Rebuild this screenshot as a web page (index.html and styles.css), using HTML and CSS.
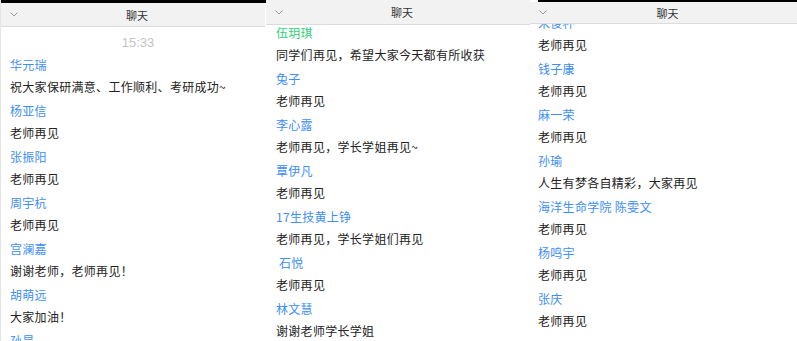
FILE: index.html
```html
<!DOCTYPE html>
<html>
<head>
<meta charset="utf-8">
<title>聊天</title>
<link rel="stylesheet" href="styles.css">
</head>
<body>
<div class="board">

  <section class="panel panel-one">
    <div class="bar"></div>
    <header class="head">
      <span class="chev"><svg width="8" height="5" viewBox="0 0 8 5"><path d="M0.5 0.5 L4 4 L7.5 0.5" fill="none" stroke="#999" stroke-width="1"/></svg></span>
      <span class="title">聊天</span>
    </header>
    <div class="body">
      <div class="list">
        <div class="time">15:33</div>
        <div class="msg"><div class="name">华元瑞</div><div class="text">祝大家保研满意、工作顺利、考研成功~</div></div>
        <div class="msg"><div class="name">杨亚信</div><div class="text">老师再见</div></div>
        <div class="msg"><div class="name">张振阳</div><div class="text">老师再见</div></div>
        <div class="msg"><div class="name">周宇杭</div><div class="text">老师再见</div></div>
        <div class="msg"><div class="name">宫澜嘉</div><div class="text">谢谢老师，老师再见！</div></div>
        <div class="msg"><div class="name">胡萌远</div><div class="text">大家加油！</div></div>
        <div class="msg"><div class="name">孙昊</div><div class="text">老师再见</div></div>
      </div>
    </div>
  </section>

  <section class="panel panel-two">
    <header class="head">
      <span class="chev"><svg width="8" height="5" viewBox="0 0 8 5"><path d="M0.5 0.5 L4 4 L7.5 0.5" fill="none" stroke="#999" stroke-width="1"/></svg></span>
      <span class="title">聊天</span>
    </header>
    <div class="body">
      <div class="list">
        <div class="msg"><div class="name green">伍玥琪</div><div class="text">同学们再见，希望大家今天都有所收获</div></div>
        <div class="msg"><div class="name">兔子</div><div class="text">老师再见</div></div>
        <div class="msg"><div class="name">李心露</div><div class="text">老师再见，学长学姐再见~</div></div>
        <div class="msg"><div class="name">覃伊凡</div><div class="text">老师再见</div></div>
        <div class="msg"><div class="name">17生技黄上铮</div><div class="text">老师再见，学长学姐们再见</div></div>
        <div class="msg"><div class="name">&nbsp;石悦</div><div class="text">老师再见</div></div>
        <div class="msg"><div class="name">林文慧</div><div class="text">谢谢老师学长学姐</div></div>
      </div>
    </div>
  </section>

  <section class="panel panel-three">
    <div class="bar"></div>
    <header class="head">
      <span class="chev"><svg width="8" height="5" viewBox="0 0 8 5"><path d="M0.5 0.5 L4 4 L7.5 0.5" fill="none" stroke="#999" stroke-width="1"/></svg></span>
      <span class="title">聊天</span>
    </header>
    <div class="body">
      <div class="list">
        <div class="msg"><div class="name">宋俊杯</div><div class="text">老师再见</div></div>
        <div class="msg"><div class="name">钱子康</div><div class="text">老师再见</div></div>
        <div class="msg"><div class="name">麻一荣</div><div class="text">老师再见</div></div>
        <div class="msg"><div class="name">孙瑜</div><div class="text">人生有梦各自精彩，大家再见</div></div>
        <div class="msg"><div class="name">海洋生命学院 陈雯文</div><div class="text">老师再见</div></div>
        <div class="msg"><div class="name">杨鸣宇</div><div class="text">老师再见</div></div>
        <div class="msg"><div class="name">张庆</div><div class="text">老师再见</div></div>
      </div>
    </div>
  </section>

</div>
</body>
</html>
```

FILE: styles.css
```css
html, body {
  margin: 0;
  height: 100%;
  background: #fff;
}

body {
  font-family: "Noto Sans CJK SC", "Noto Sans", sans-serif;
  color: #222;
  overflow: hidden;
}

.board {
  display: grid;
  grid-template-columns: 266px 264px 1fr;
  height: 341px;
}

.panel {
  display: flex;
  flex-direction: column;
  overflow: hidden;
  background: #fff;
}

.panel-one {
  border-left: 1px solid #e4e4e4;
}

.bar {
  height: 3px;
  background: #000;
  flex-shrink: 0;
}

.panel-three .bar {
  height: 2px;
  margin-left: 8px;
}

.head {
  display: flex;
  align-items: center;
  height: 23px;
  padding-left: 9px;
  background: #f2f2f2;
  border-bottom: 1px solid #dcdcdc;
  flex-shrink: 0;
  position: relative;
  z-index: 1;
}

.panel-one .head {
  margin-right: 1px;
}

.panel-two .head {
  height: 24px;
}

.panel-three .head {
  height: 21px;
}

.chev {
  width: 8px;
  display: flex;
  align-items: center;
}

.title {
  flex: 1;
  text-align: center;
  margin-right: 9px;
  font-size: 11px;
  color: #333;
}

.body {
  flex: 1;
  overflow: hidden;
}

.list {
  padding-left: 9px;
}

.panel-two .list {
  margin-top: -3px;
  padding-left: 10px;
}

.panel-three .list {
  margin-top: -12px;
  padding-left: 8px;
}

.time {
  margin-top: 5px;
  height: 22px;
  line-height: 22px;
  text-align: center;
  font-family: "Liberation Sans", Arial, sans-serif;
  font-size: 13px;
  color: #c4c4c4;
}

.msg {
  padding-bottom: 2px;
}

.name, .text {
  height: 22px;
  line-height: 22px;
  font-size: 12px;
  letter-spacing: 0.3px;
  white-space: nowrap;
}

.name {
  color: #3d8ef5;
}

.name.green {
  color: #2ecf78;
}

.text {
  color: #222;
}
```
